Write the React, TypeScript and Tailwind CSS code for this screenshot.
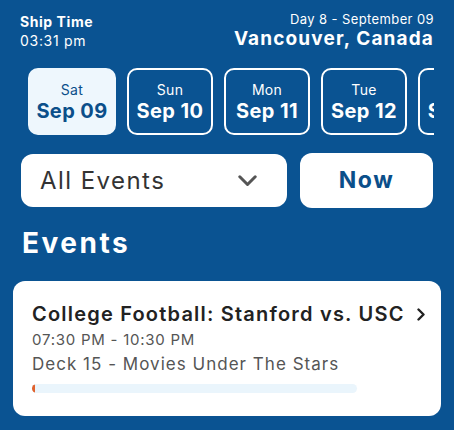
const days = [
    { name: "Sat", date: "Sep 09", active: true },
    { name: "Sun", date: "Sep 10" },
    { name: "Mon", date: "Sep 11" },
    { name: "Tue", date: "Sep 12" },
    { name: "Wed", date: "Sep 13" },
];

function DayCard({ name, date, active = false }: { name: string; date: string; active?: boolean }) {
    const look = active
        ? "w-[88px] bg-[#eef7fd] border-[#eef7fd] text-[#0b4f8a]"
        : "w-[86px] border-white text-white";
    return (
        <div className={"shrink-0 h-[67px] rounded-[10px] border-2 flex flex-col items-center justify-center " + look}>
            <span className="text-[14px] leading-[18px] tracking-[0.02em]">{name}</span>
            <span className="text-[20px] leading-[24px] font-bold tracking-[0.02em]">{date}</span>
        </div>
    );
}

export default function App() {
    return (
        <div className="w-[454px] h-[430px] overflow-hidden bg-[#0a5392] text-white font-['Inter',sans-serif]">
            {/* header */}
            <div className="flex flex-row justify-between pl-5 pr-5 pt-[10px]">
                <div className="pt-[2px]">
                    <h2 className="text-[14px] leading-[19px] font-bold tracking-[0.04em]">Ship Time</h2>
                    <h2 className="text-[14px] leading-[19px] tracking-[0.05em]">03:31 pm</h2>
                </div>
                <div className="text-right">
                    <h2 className="text-[13px] leading-[18px] tracking-[0.03em]">Day 8 - September 09</h2>
                    <h1 className="text-[19px] leading-[22px] font-bold tracking-[0.06em]">Vancouver, Canada</h1>
                </div>
            </div>

            {/* day picker */}
            <div className="mt-[18px] ml-[28px] mr-5 overflow-hidden">
                <div className="flex flex-row gap-[11px]">
                    {days.map((d) => (
                        <DayCard key={d.date} name={d.name} date={d.date} active={d.active} />
                    ))}
                </div>
            </div>

            {/* filters */}
            <div className="flex flex-row items-center gap-[13px] pl-[21px] pr-[21px] mt-[18px]">
                <div className="w-[266px] h-[53px] rounded-[12px] bg-white flex flex-row items-center justify-between pl-[19px] pr-[30px]">
                    <span className="text-[24px] tracking-[0.06em] text-[#333]">All Events</span>
                    <svg width="19" height="12" viewBox="0 0 19 12" fill="none">
                        <polyline points="1.8,1.8 9.5,9.5 17.2,1.8" stroke="#555" strokeWidth="3" strokeLinecap="round" strokeLinejoin="round" />
                    </svg>
                </div>
                <div className="flex-1 h-[55px] rounded-[12px] bg-white flex items-center justify-center">
                    <span className="text-[23px] font-bold tracking-[0.07em] text-[#0b4f8a]">Now</span>
                </div>
            </div>

            <h1 className="pl-[22px] mt-[17px] text-[28px] leading-[36px] font-bold tracking-[0.09em]">Events</h1>

            {/* event card */}
            <div className="mx-[13px] mt-[20px] bg-white rounded-[12px] pl-[19px] pr-[16px] pt-[19px] pb-[23px] text-[#222]">
                <div className="flex flex-row items-center justify-between">
                    <h3 className="text-[20px] leading-[28px] font-semibold tracking-[0.06em]">College Football: Stanford vs. USC</h3>
                    <svg width="8" height="13" viewBox="0 0 8 13" fill="none">
                        <polyline points="1.5,1.5 6.5,6.5 1.5,11.5" stroke="#222" strokeWidth="2.4" strokeLinecap="round" strokeLinejoin="round" />
                    </svg>
                </div>
                <p className="text-[15px] leading-[24px] tracking-[0.05em] text-[#555]">07:30 PM - 10:30 PM</p>
                <p className="text-[17px] leading-[24px] tracking-[0.06em] text-[#555]">Deck 15 - Movies Under The Stars</p>
                <div className="mt-[8px] w-[325px] h-[9px] rounded-full bg-[#eaf5fc] overflow-hidden">
                    <div className="h-full w-[3px] bg-[#e0622d] rounded-full" />
                </div>
            </div>
        </div>
    );
}
